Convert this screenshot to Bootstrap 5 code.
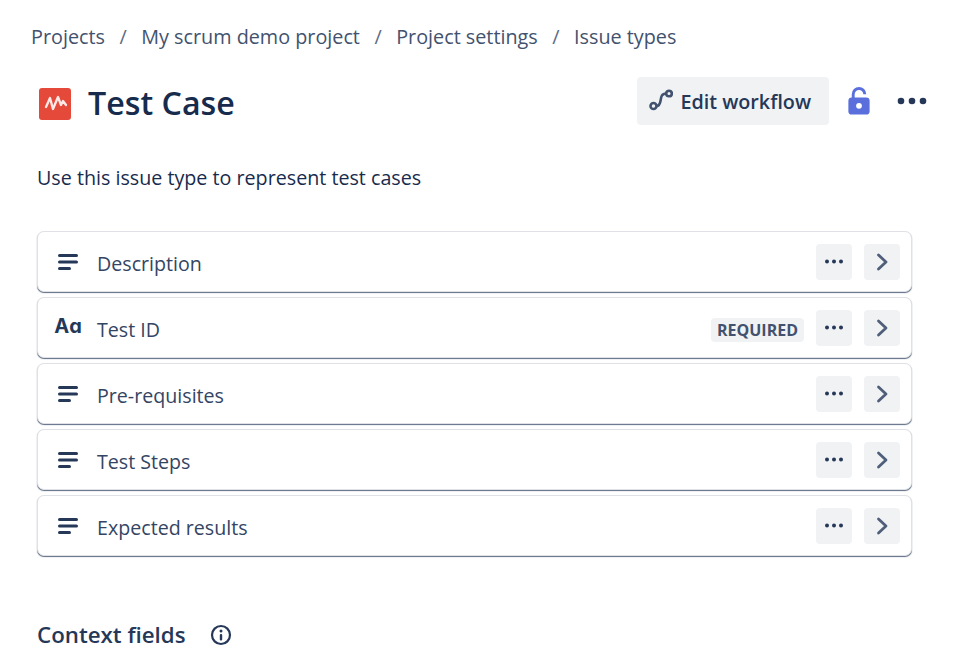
<!DOCTYPE html>
<html lang="en">
<head>
<meta charset="utf-8">
<title>Test Case</title>
<link href="https://cdn.jsdelivr.net/npm/bootstrap@5.3.0/dist/css/bootstrap.min.css" rel="stylesheet">
<style>
html,body{height:658px;overflow:hidden;background:#fff}
body{font-family:"Open Sans","Noto Sans","Liberation Sans",sans-serif;color:#172b4d;padding:0 59px 0 37px}
.crumbs{margin:0 0 0 -6px;height:74px;padding-top:23px;font-size:19.8px;line-height:28px;color:#42526e;--bs-breadcrumb-divider-color:#5e6c84;--bs-breadcrumb-item-active-color:#42526e;--bs-breadcrumb-item-padding-x:14.5px;--bs-breadcrumb-margin-bottom:0}
.crumbs a{color:#42526e;text-decoration:none}
.head{height:60px;margin-right:-15px}
.type-ico{width:32px;height:32px;flex:none;margin:0 17px 0 2px}
.ttl{font-size:32.2px;line-height:40px;font-weight:600;color:#172b4d;margin:-2px 0 0}
.wf{background:#f1f2f4;border:0;border-radius:4px;height:48px;padding:3px 18px 0 12px;font-size:19.75px;font-weight:600;color:#253858;gap:7px;margin-top:-7px;--bs-btn-hover-bg:#ebecf0}
.wf svg{margin-top:-5px}
.lock{margin:-7px 26px 0 18px}
.more{margin-top:-6px}
.intro{font-size:19.7px;line-height:28px;margin:30px 0 39px;color:#172b4d}
.stack{gap:5px}
.frow{height:61px;background:#fff;border:1px solid #dfe1e6;border-radius:7px;box-shadow:0 1px 1px #5e6c84;padding:0 11px 0 17px}
.fico{width:26px;flex:none;margin-right:16px;display:flex;justify-content:center}
.fname{font-size:19.65px;color:#344563;line-height:28px;margin-top:5px}
.sq{width:36px;height:36px;background:#f1f2f4;border:0;border-radius:4px;padding:0;margin-left:12px;display:flex;align-items:center;justify-content:center}
.req{background:#f1f2f4;color:#42526e;font-size:16px;line-height:24px;font-weight:700;border-radius:4px;padding:0 6px;margin-top:4px}
.aa{font-size:20px;font-weight:700;color:#253858;line-height:26px;margin-top:-3px;font-family:Inter,"Noto Sans",sans-serif}
.ctx{margin-top:64px;gap:24px}
.ctx-t{font-size:22.3px;font-weight:600;color:#253858;margin:0;line-height:30px}
</style>
</head>
<body>
<nav aria-label="breadcrumb">
<ol class="breadcrumb crumbs">
<li class="breadcrumb-item"><a href="#">Projects</a></li>
<li class="breadcrumb-item"><a href="#">My scrum demo project</a></li>
<li class="breadcrumb-item"><a href="#">Project settings</a></li>
<li class="breadcrumb-item active" aria-current="page">Issue types</li>
</ol>
</nav>
<div class="d-flex align-items-center head">
<svg class="type-ico" viewBox="0 0 32 32"><rect width="32" height="32" rx="3" fill="#e5493a"/><path d="M7 19l4-9 3 11 5-12 3 8 2-4 3 4" fill="none" stroke="#ffe9e6" stroke-width="2.300" stroke-linecap="round" stroke-linejoin="round"/></svg>
<h1 class="ttl">Test Case</h1>
<div class="d-flex align-items-center ms-auto">
<button class="btn d-flex align-items-center wf" type="button"><svg width="24" height="24" viewBox="0 0 24 24" fill="none" stroke="#42526e" stroke-width="2.600"><circle cx="4.500" cy="18" r="3"/><circle cx="20" cy="5.500" r="2.800"/><path d="M7.500 18c7 0 1-12.500 9.700-12.500"/></svg>Edit workflow</button>
<svg class="lock" width="24" height="28" viewBox="0 0 24 29"><path d="M6 12V7.500a6 6 0 0 1 12 0" fill="none" stroke="#5a6fdc" stroke-width="3"/><rect x="1" y="11" width="22" height="17.500" rx="3.500" fill="#5a6fdc"/><circle cx="12" cy="19.500" r="3" fill="#fff"/></svg>
<svg class="more" width="30" height="8" viewBox="0 0 30 8" fill="#253858"><circle cx="4" cy="4" r="3.300"/><circle cx="15" cy="4" r="3.300"/><circle cx="26" cy="4" r="3.300"/></svg>
</div>
</div>
<p class="intro">Use this issue type to represent test cases</p>
<div class="d-flex flex-column stack">
<div class="d-flex align-items-center frow">
<span class="fico"><svg width="22" height="18" viewBox="0 0 22 18" fill="#253858"><rect x="1" y="1" width="20" height="3" rx="1.500"/><rect x="1" y="7.500" width="20" height="3" rx="1.500"/><rect x="1" y="14" width="13" height="3" rx="1.500"/></svg></span>
<span class="fname">Description</span>
<button class="sq ms-auto" type="button"><svg width="20" height="5" viewBox="0 0 20 5" fill="#253858"><circle cx="3" cy="2.500" r="2"/><circle cx="10" cy="2.500" r="2"/><circle cx="17" cy="2.500" r="2"/></svg></button>
<button class="sq" type="button"><svg width="14" height="18" viewBox="0 0 14 18" fill="none" stroke="#505f79" stroke-width="2.800" stroke-linecap="round" stroke-linejoin="round"><path d="M3.500 2l7.500 7-7.500 7"/></svg></button>
</div>
<div class="d-flex align-items-center frow">
<span class="fico aa">Aɑ</span>
<span class="fname">Test ID</span>
<span class="req ms-auto">REQUIRED</span>
<button class="sq" type="button"><svg width="20" height="5" viewBox="0 0 20 5" fill="#253858"><circle cx="3" cy="2.500" r="2"/><circle cx="10" cy="2.500" r="2"/><circle cx="17" cy="2.500" r="2"/></svg></button>
<button class="sq" type="button"><svg width="14" height="18" viewBox="0 0 14 18" fill="none" stroke="#505f79" stroke-width="2.800" stroke-linecap="round" stroke-linejoin="round"><path d="M3.500 2l7.500 7-7.500 7"/></svg></button>
</div>
<div class="d-flex align-items-center frow">
<span class="fico"><svg width="22" height="18" viewBox="0 0 22 18" fill="#253858"><rect x="1" y="1" width="20" height="3" rx="1.500"/><rect x="1" y="7.500" width="20" height="3" rx="1.500"/><rect x="1" y="14" width="13" height="3" rx="1.500"/></svg></span>
<span class="fname">Pre-requisites</span>
<button class="sq ms-auto" type="button"><svg width="20" height="5" viewBox="0 0 20 5" fill="#253858"><circle cx="3" cy="2.500" r="2"/><circle cx="10" cy="2.500" r="2"/><circle cx="17" cy="2.500" r="2"/></svg></button>
<button class="sq" type="button"><svg width="14" height="18" viewBox="0 0 14 18" fill="none" stroke="#505f79" stroke-width="2.800" stroke-linecap="round" stroke-linejoin="round"><path d="M3.500 2l7.500 7-7.500 7"/></svg></button>
</div>
<div class="d-flex align-items-center frow">
<span class="fico"><svg width="22" height="18" viewBox="0 0 22 18" fill="#253858"><rect x="1" y="1" width="20" height="3" rx="1.500"/><rect x="1" y="7.500" width="20" height="3" rx="1.500"/><rect x="1" y="14" width="13" height="3" rx="1.500"/></svg></span>
<span class="fname">Test Steps</span>
<button class="sq ms-auto" type="button"><svg width="20" height="5" viewBox="0 0 20 5" fill="#253858"><circle cx="3" cy="2.500" r="2"/><circle cx="10" cy="2.500" r="2"/><circle cx="17" cy="2.500" r="2"/></svg></button>
<button class="sq" type="button"><svg width="14" height="18" viewBox="0 0 14 18" fill="none" stroke="#505f79" stroke-width="2.800" stroke-linecap="round" stroke-linejoin="round"><path d="M3.500 2l7.500 7-7.500 7"/></svg></button>
</div>
<div class="d-flex align-items-center frow">
<span class="fico"><svg width="22" height="18" viewBox="0 0 22 18" fill="#253858"><rect x="1" y="1" width="20" height="3" rx="1.500"/><rect x="1" y="7.500" width="20" height="3" rx="1.500"/><rect x="1" y="14" width="13" height="3" rx="1.500"/></svg></span>
<span class="fname">Expected results</span>
<button class="sq ms-auto" type="button"><svg width="20" height="5" viewBox="0 0 20 5" fill="#253858"><circle cx="3" cy="2.500" r="2"/><circle cx="10" cy="2.500" r="2"/><circle cx="17" cy="2.500" r="2"/></svg></button>
<button class="sq" type="button"><svg width="14" height="18" viewBox="0 0 14 18" fill="none" stroke="#505f79" stroke-width="2.800" stroke-linecap="round" stroke-linejoin="round"><path d="M3.500 2l7.500 7-7.500 7"/></svg></button>
</div>
</div>
<div class="d-flex align-items-center ctx">
<h2 class="ctx-t">Context fields</h2>
<svg width="22" height="22" viewBox="0 0 22 22"><circle cx="11" cy="11" r="9" fill="none" stroke="#253858" stroke-width="2.200"/><circle cx="11" cy="7" r="1.500" fill="#253858"/><rect x="9.800" y="10" width="2.400" height="6.500" rx="1" fill="#253858"/></svg>
</div>
</body>
</html>
